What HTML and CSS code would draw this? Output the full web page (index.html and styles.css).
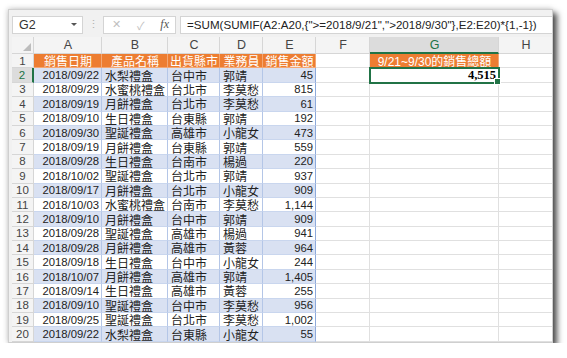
FILE: index.html
```html
<!DOCTYPE html>
<html lang="zh-Hant">

<head>
 <meta charset="UTF-8">
 <meta name="viewport" content="width=device-width, initial-scale=1.0">
 <title>SUMIF</title>
 <link rel="stylesheet" href="styles.css">
</head>

<body>
 <div class="window">
  <div class="formula-bar">
   <div class="name-box"><span>G2</span><span class="caret"></span></div>
   <div class="grip">⋮</div>
   <div class="fx-box">
    <span class="icon">✕</span>
    <span class="icon">✓</span>
    <span class="fx">fx</span>
   </div>
   <div class="formula">=SUM(SUMIF(A2:A20,{"&gt;=2018/9/21","&gt;2018/9/30"},E2:E20)*{1,-1})</div>
  </div>
  <div class="sheet" id="sheet"></div>
 </div>

 <script>
  const rows = [
   ['2018/09/22', '水梨禮盒', '台中市', '郭靖', '45'],
   ['2018/09/29', '水蜜桃禮盒', '台北市', '李莫愁', '815'],
   ['2018/09/19', '月餅禮盒', '台北市', '李莫愁', '61'],
   ['2018/09/10', '生日禮盒', '台東縣', '郭靖', '192'],
   ['2018/09/30', '聖誕禮盒', '高雄市', '小龍女', '473'],
   ['2018/09/19', '月餅禮盒', '台東縣', '郭靖', '559'],
   ['2018/09/28', '生日禮盒', '台南市', '楊過', '220'],
   ['2018/10/02', '聖誕禮盒', '台北市', '郭靖', '937'],
   ['2018/09/17', '月餅禮盒', '台北市', '小龍女', '909'],
   ['2018/10/03', '水蜜桃禮盒', '台南市', '李莫愁', '1,144'],
   ['2018/09/10', '月餅禮盒', '台中市', '郭靖', '909'],
   ['2018/09/28', '聖誕禮盒', '高雄市', '楊過', '941'],
   ['2018/09/28', '月餅禮盒', '高雄市', '黃蓉', '964'],
   ['2018/09/18', '生日禮盒', '台中市', '小龍女', '244'],
   ['2018/10/07', '月餅禮盒', '高雄市', '郭靖', '1,405'],
   ['2018/09/14', '生日禮盒', '高雄市', '黃蓉', '255'],
   ['2018/09/10', '聖誕禮盒', '台中市', '李莫愁', '956'],
   ['2018/09/25', '聖誕禮盒', '台北市', '李莫愁', '1,002'],
   ['2018/09/22', '水梨禮盒', '台東縣', '小龍女', '55']
  ];

  const sheet = document.getElementById('sheet');

  function cell(text, cls) {
   const div = document.createElement('div');
   div.className = 'cell ' + cls;
   div.textContent = text;
   sheet.appendChild(div);
  }

  // column letters
  cell('', 'corner');
  ['A', 'B', 'C', 'D', 'E', 'F', 'G', 'H'].forEach(c => {
   cell(c, 'col-head' + (c === 'G' ? ' active' : ''));
  });

  // table header
  cell('1', 'row-head');
  ['銷售日期', '產品名稱', '出貨縣市', '業務員', '銷售金額'].forEach(t => cell(t, 'th'));
  cell('', 'blank');
  cell('9/21~9/30的銷售總額', 'th');
  cell('', 'blank');

  rows.forEach((r, i) => {
   const n = i + 2;
   const band = n % 2 === 0 ? ' band' : '';
   cell(n, 'row-head' + (n === 2 ? ' active' : ''));
   cell(r[0], 'td right' + band);
   cell(r[1], 'td' + band);
   cell(r[2], 'td' + band);
   cell(r[3], 'td' + band);
   cell(r[4], 'td right last' + band);
   cell('', 'blank');
   if (n === 2) {
    cell('4,515', 'blank total');
   } else {
    cell('', 'blank');
   }
   cell('', 'blank');
  });
 </script>
</body>

</html>
```

FILE: styles.css
```css
body {
  margin: 0;
  background-color: #fff;
  font-family: 'Liberation Sans', 'Noto Sans CJK TC', sans-serif;
  color: #222;
}

.window {
  margin: 9px 0 0 8px;
  width: 545px;
  height: 334px;
  box-sizing: border-box;
  padding-left: 3px;
  background-color: #f1f1f1;
  border: 1px solid #cfcfcf;
  overflow: hidden;
  box-shadow: 4px 4px 6px rgba(0, 0, 0, 0.7), -1px -1px 5px rgba(0, 0, 0, 0.15);
}

.formula-bar {
  display: flex;
  align-items: center;
  height: 27px;
  padding-top: 2px;
  box-sizing: border-box;
}

.name-box,
.fx-box,
.formula {
  height: 18px;
  box-sizing: border-box;
  background-color: #fff;
  border: 1px solid #d4d4d4;
  display: flex;
  align-items: center;
  font-size: 12.5px;
}

.name-box {
  width: 71px;
  padding: 0 5px 0 6px;
  justify-content: space-between;
  color: #333;
}

.caret {
  width: 0;
  height: 0;
  border-left: 3px solid transparent;
  border-right: 3px solid transparent;
  border-top: 3px solid #555;
}

.grip {
  width: 20px;
  text-align: center;
  color: #b0b0b0;
  font-size: 11px;
}

.fx-box {
  width: 73px;
  padding: 0 6px 0 8px;
  justify-content: space-between;
}

.fx-box .icon {
  color: #c0c0c0;
  font-size: 11px;
}

.fx {
  font-family: 'Liberation Serif', serif;
  font-style: italic;
  font-size: 12px;
  color: #555;
}

.formula {
  flex: 1;
  margin-left: 4px;
  padding-left: 6px;
  border-right: none;
  font-size: 11.6px;
  color: #222;
  white-space: nowrap;
}

.sheet {
  display: grid;
  grid-template-columns: 22px 68px 66px 52px 43px 53px 54px 129px 54px;
  grid-template-rows: 17px repeat(20, 14.4px);
  background-color: #fff;
  font-size: 12px;
}

.cell {
  display: flex;
  align-items: center;
  box-sizing: border-box;
  border-right: 1px solid #e0e0e0;
  border-bottom: 1px solid #e0e0e0;
  padding: 0 2px 0 3px;
  white-space: nowrap;
}

.corner,
.col-head,
.row-head {
  background-color: #f4f4f4;
  color: #444;
  justify-content: center;
  border-color: #d6d6d6;
}

.corner {
  position: relative;
}

.corner::after {
  content: '';
  position: absolute;
  right: 2px;
  bottom: 2px;
  border-left: 8px solid transparent;
  border-bottom: 8px solid #bdbdbd;
}

.col-head {
  font-size: 12.5px;
}

.row-head {
  padding: 0;
  font-size: 11.5px;
}

.col-head.active {
  background-color: #dcdcdc;
  color: #217346;
  border-bottom: 2px solid #217346;
}

.row-head.active {
  background-color: #dcdcdc;
  color: #217346;
  border-right: 2px solid #217346;
}

.th {
  background-color: #ed7d31;
  color: #fff;
  justify-content: center;
  border-right-color: #f3a774;
  border-bottom-color: #f3a774;
}

.td {
  border-right-color: #b4c6e7;
  border-bottom-color: #c9d6ee;
}

.td.band {
  background-color: #d9e1f2;
}

.right {
  justify-content: flex-end;
  font-size: 11.3px;
}

.td.last {
  border-right-color: #8eaadb;
}

.total {
  position: relative;
  justify-content: flex-end;
  font-family: 'Liberation Serif', serif;
  font-weight: bold;
  font-size: 12.5px;
  color: #000;
  outline: 2px solid #217346;
  outline-offset: -1px;
}

.total::after {
  content: '';
  position: absolute;
  right: -3px;
  bottom: -3px;
  width: 5px;
  height: 5px;
  background-color: #217346;
  border: 1px solid #fff;
}
```
